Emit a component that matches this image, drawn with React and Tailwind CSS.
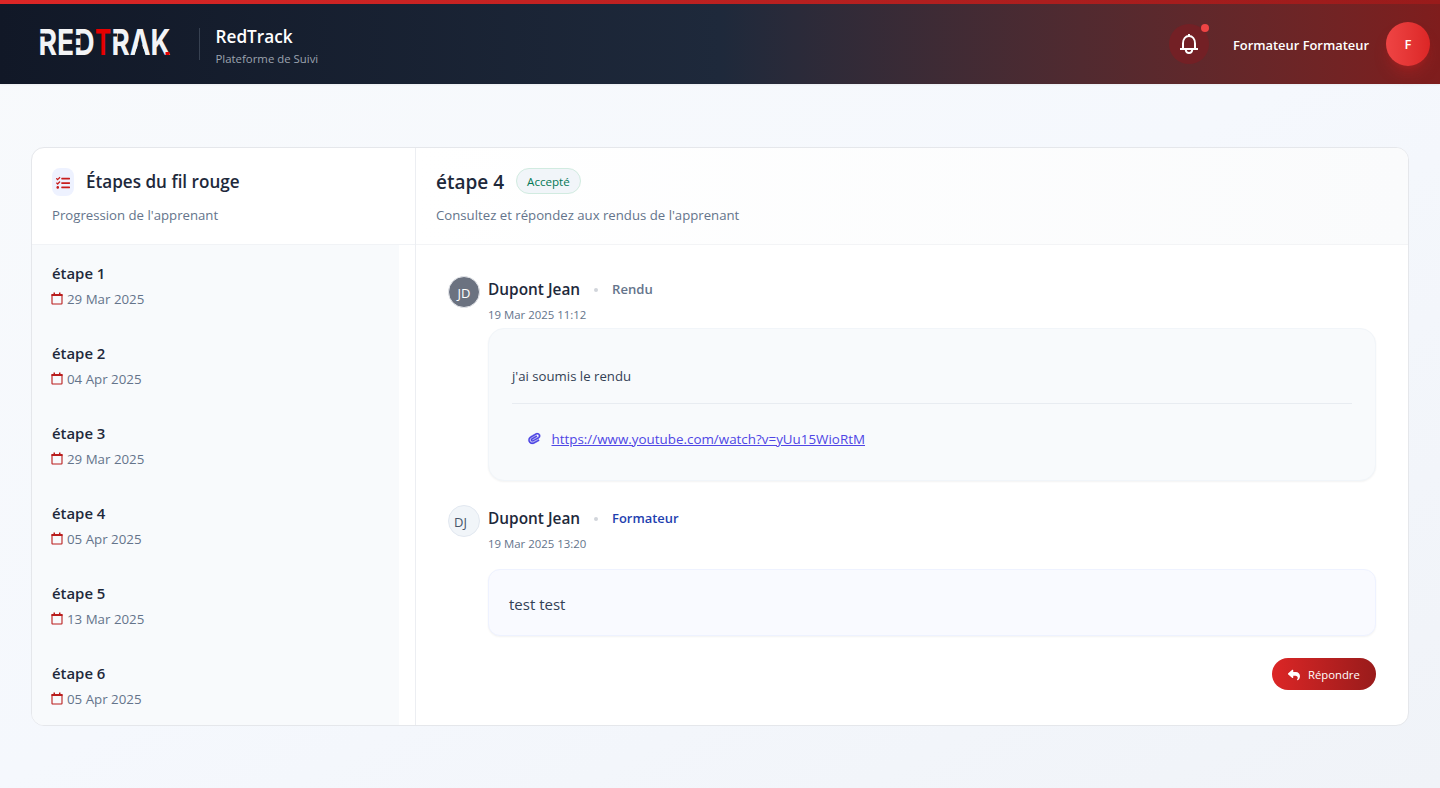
import { FaPaperclip, FaReply } from "react-icons/fa6";
import { FaTasks } from "react-icons/fa";

const steps = [
  { title: "étape 1", date: "29 Mar 2025" },
  { title: "étape 2", date: "04 Apr 2025" },
  { title: "étape 3", date: "29 Mar 2025" },
  { title: "étape 4", date: "05 Apr 2025" },
  { title: "étape 5", date: "13 Mar 2025" },
  { title: "étape 6", date: "05 Apr 2025" },
];

function Logo() {
  return (
    <svg width="132" height="48" viewBox="0 0 132 48" className="shrink-0 overflow-visible" fontFamily="Inter, sans-serif" fontSize="35.5" fontWeight="700" fill="#f3f4f6">
      <text transform="translate(-1.5 35) scale(0.8 1)" textLength="70" lengthAdjust="spacingAndGlyphs">RED</text>
      <text transform="translate(55 35) scale(0.69 1)" fill="#e60000" textLength="23.2" lengthAdjust="spacingAndGlyphs">T</text>
      <text transform="translate(71.5 35) scale(0.8 1)" textLength="73.75" lengthAdjust="spacingAndGlyphs">RAK</text>
      <g fill="#141b2a">
        <rect x="-0.5" y="13.5" width="5.5" height="3" />
        <rect x="71" y="13.5" width="6" height="3" />
        <rect x="35" y="15" width="5.5" height="3.5" />
        <rect x="35" y="25" width="5.5" height="2.5" />
        <path d="M100 18L105.500 35.500H94.500z" />
      </g>
      <rect x="125.5" y="32" width="4" height="3" fill="#e60000" />
    </svg>
  );
}

function BellIcon() {
  return (
    <svg width="20" height="22" viewBox="0 0 20 22" fill="none" stroke="currentColor" strokeWidth="2">
      <path d="M1 16h18M10 1v2.5M4 16v-5.500C4 6 6.500 3 10 3s6 3 6 7.500V16" />
      <path d="M6.800 17c.2 2 1.600 3 3.200 3s3-1 3.200-3" />
    </svg>
  );
}

function CalendarIcon() {
  return (
    <svg width="12" height="13" viewBox="0 0 12 13" className="-ml-px mb-px text-[#b91c1c]">
      <rect x="1" y="2.500" width="10" height="9.500" rx="0.6" fill="none" stroke="currentColor" strokeWidth="1.1" />
      <path d="M.5 2h11v2H.5zM2.500 .5H4V2H2.500zM8 .5h1.500V2H8z" fill="currentColor" />
    </svg>
  );
}

function Header() {
  return (
    <header className="flex h-[84px] flex-col bg-linear-to-r from-[#111827] via-[#1e293b] to-[#7f1d1d] shadow-xs">
      <div className="h-1 shrink-0 bg-linear-to-r from-[#dc2626] to-[#991b1b]" />
      <div className="flex flex-1 items-center pr-2.5 pl-[39.5px]">
        <Logo />
        <div className="ml-[27px] h-8 w-px bg-[#374151]" />
        <div className="ml-4 flex flex-col pt-[5px]">
          <span className="text-[17.2px] leading-[25px] font-semibold text-white">RedTrack</span>
          <span className="text-[11.4px] leading-5 text-[#9ca3af]">Plateforme de Suivi</span>
        </div>
        <div className="ml-auto flex items-center">
          <div className="relative flex size-10 items-center justify-center rounded-full bg-[#732025] text-white">
            <BellIcon />
            <span className="absolute top-0 right-0 size-2 rounded-full bg-[#ef4444]" />
          </div>
          <span className="ml-6 pt-[3px] text-[12.9px] font-semibold text-white">Formateur Formateur</span>
          <div className="ml-[17px] flex size-11 items-center justify-center rounded-full bg-linear-to-r from-[#ef4444] to-[#dc2626] pt-0.5 text-[13px] font-semibold text-white shadow-lg shadow-[#dc2626]/30">F</div>
        </div>
      </div>
    </header>
  );
}

function MessageHead({ name, role, roleClass, date }) {
  return (
    <>
      <div className="flex h-[27px] items-center pt-px">
        <span className="text-[15.4px] font-semibold">{name}</span>
        <span className="mr-[14px] ml-[14px] size-1 rounded-full bg-[#d1d5db]" />
        <span className={roleClass}>{role}</span>
      </div>
      <p className="mt-1 text-[11.4px] leading-4 text-[#64748b]">{date}</p>
    </>
  );
}

export default function App() {
  return (
    <div className="h-[788px] overflow-hidden bg-linear-to-br from-[#f8fafc] via-[#f5f8fd] to-[#f0f3f8] font-['Open_Sans','Noto_Sans',sans-serif] text-[#1e293b]">
      <Header />
      <main className="px-[31px] pt-[63px]">
        <div className="flex h-[579px] overflow-hidden rounded-[13px] border border-[#e5e7eb] bg-white">
          <aside className="flex w-[384px] shrink-0 flex-col border-r border-[#eceef2]">
            <div className="h-[97px] shrink-0 border-b border-[#f1f3f6] px-5 pt-5">
              <div className="flex h-7 items-center gap-3">
                <span className="flex h-7 w-[22px] items-center justify-center rounded-lg bg-[#eef2ff] pt-px text-[#c81e1e]"><FaTasks size={14} /></span>
                <h2 className="text-[17.1px] font-semibold">Étapes du fil rouge</h2>
              </div>
              <p className="mt-[9px] text-[13.2px] leading-5 text-[#64748b]">Progression de l'apprenant</p>
            </div>
            <div className="mr-4 flex-1 bg-[#f8fafc]">
              {steps.map((s) => (
                <div key={s.title} className="h-20 px-5 pt-4">
                  <h3 className="text-[14.9px] leading-6 font-semibold">{s.title}</h3>
                  <p className="mt-1 flex items-center gap-1 text-[13.3px] leading-5 text-[#64748b]"><CalendarIcon />{s.date}</p>
                </div>
              ))}
            </div>
          </aside>
          <section className="flex min-w-0 flex-1 flex-col">
            <div className="h-[97px] shrink-0 border-b border-[#f3f4f6] bg-linear-to-r from-white to-[#fafbfc] px-5 pt-5">
              <div className="flex h-7 items-center gap-3">
                <h2 className="text-[19px] font-semibold">étape 4</h2>
                <span className="mb-0.5 rounded-full border border-[#d1ebe0] bg-[#f1f5f9] px-2.5 pt-px text-[11.6px] leading-[23px] font-medium text-[#047857]">Accepté</span>
              </div>
              <p className="mt-[9px] text-[13.2px] leading-5 text-[#64748b]">Consultez et répondez aux rendus de l'apprenant</p>
            </div>
            <div className="px-8 pt-[31px]">
              <div className="flex gap-2">
                <div className="flex size-8 items-center justify-center rounded-full border border-[#e5e7eb] bg-[#6b7280] pt-[3px] text-[13px] text-white">JD</div>
                <div className="min-w-0 flex-1">
                  <MessageHead name="Dupont Jean" role="Rendu" roleClass="text-[13.1px] font-semibold text-[#64748b]" date="19 Mar 2025 11:12" />
                  <div className="mt-[5px] h-[153px] rounded-2xl border border-[#f1f5f9] bg-[#f8fafc] px-[23px] pt-[37px] shadow-xs">
                    <p className="border-b border-[#e8ecf1] pb-[17px] text-[13.2px] leading-5 text-[#334155]">j'ai soumis le rendu</p>
                    <p className="mt-[25px] flex items-center gap-[11px] pl-4 text-[13.4px] leading-5 text-[#4f46e5]"><FaPaperclip size={12.5} strokeWidth={14} stroke="currentColor" className="mb-0.5 rotate-[16deg]" /><a className="underline">https://www.youtube.com/watch?v=yUu15WioRtM</a></p>
                  </div>
                </div>
              </div>
              <div className="mt-6 flex gap-2">
                <div className="flex size-8 items-center justify-center rounded-full border border-[#e2e8f0] bg-[#f1f5f9] pt-[3px] pr-[7px] text-[13px] text-[#475569]">DJ</div>
                <div className="min-w-0 flex-1">
                  <MessageHead name="Dupont Jean" role="Formateur" roleClass="text-[12.9px] font-semibold text-[#1e40af]" date="19 Mar 2025 13:20" />
                  <div className="mt-[17px] flex h-[67px] items-center rounded-xl border border-[#eef2ff] bg-[#f9faff] px-5 pt-[3px] text-[15px] text-[#334155] shadow-xs">test test</div>
                </div>
              </div>
              <div className="mt-[22px] flex justify-end">
                <button className="flex h-8 w-[104px] items-center gap-2 rounded-full bg-linear-to-r from-[#dc2626] to-[#991b1b] pt-0.5 pl-4 text-[11.3px] text-white"><FaReply size={12} className="mb-px" />Répondre</button>
              </div>
            </div>
          </section>
        </div>
      </main>
    </div>
  );
}
